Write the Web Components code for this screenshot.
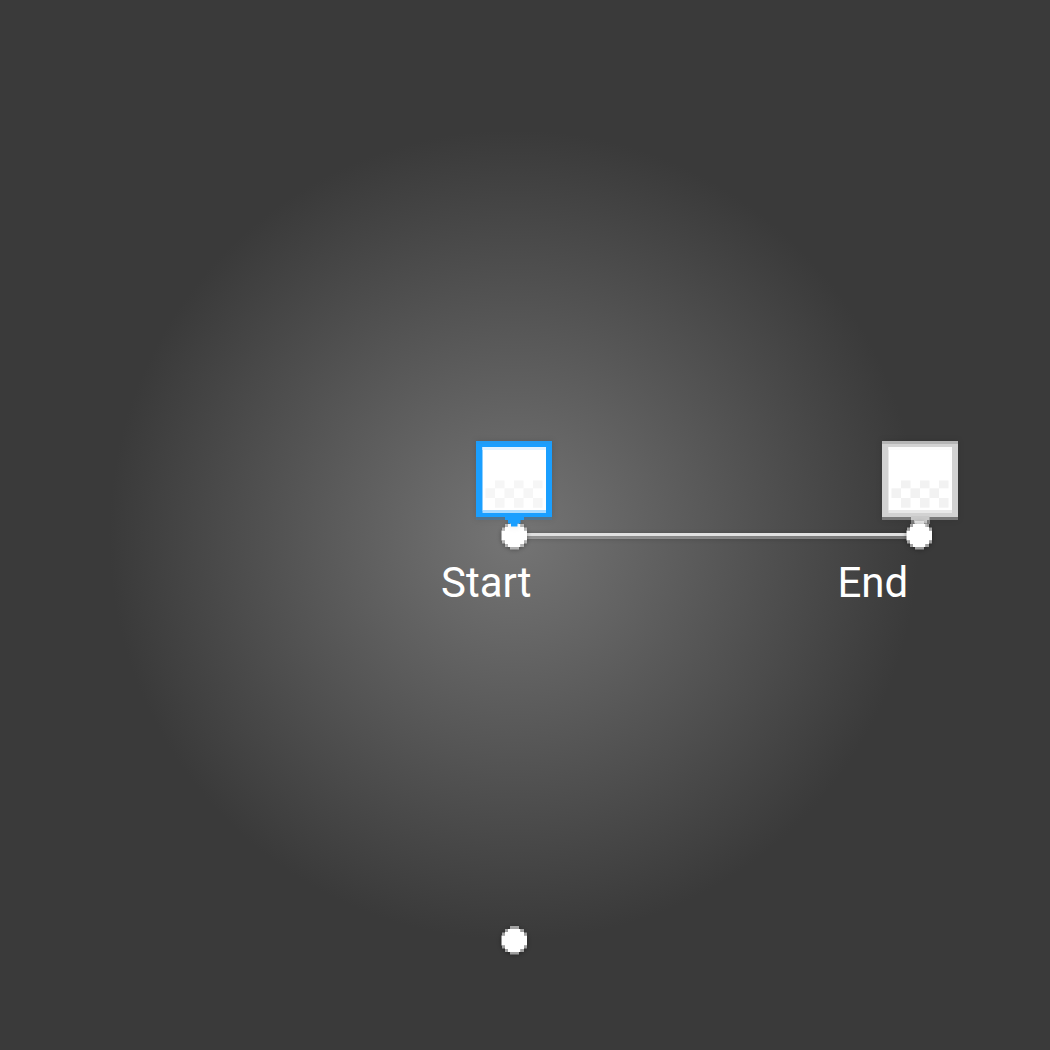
<!DOCTYPE html>
<html lang="en">
<head>
<meta charset="utf-8">
<title>Radial gradient editor</title>
<style>
html, body { margin: 0; width: 1050px; height: 1050px; overflow: hidden; background: #3a3a3a; }
</style>
</head>
<body>
<gradient-canvas>
  <gradient-rail style="left:514px;top:533px;width:405px"></gradient-rail>
  <color-stop style="left:876px;top:435px"></color-stop>
  <drag-handle style="left:498px;top:519px"></drag-handle>
  <drag-handle style="left:903px;top:519px"></drag-handle>
  <drag-handle style="left:498px;top:924px"></drag-handle>
  <color-stop selected style="left:470px;top:435px"></color-stop>
  <stop-label style="left:441px;top:558px">Start</stop-label>
  <stop-label style="left:837.5px;top:558px">End</stop-label>
</gradient-canvas>
<script>
class GradientCanvas extends HTMLElement {
  constructor() {
    super();
    this.attachShadow({ mode: 'open' }).innerHTML = `
      <style>
        :host { display: block; position: relative; width: 1050px; height: 1050px; overflow: hidden;
          background: radial-gradient(circle 405px at 514px 535px, #757575, #3a3a3a) #3a3a3a; }
      </style><slot></slot>`;
  }
}
class GradientRail extends HTMLElement {
  constructor() {
    super();
    this.attachShadow({ mode: 'open' }).innerHTML = `
      <style>
        :host { display: flex; flex-direction: column; position: absolute; filter: drop-shadow(0 1px 2px rgba(0,0,0,.3)); }
        .hi { height: 3px; background: #e0e0e0; }
        .lo { height: 3px; background: rgba(255,255,255,.32); }
      </style><div class="hi"></div><div class="lo"></div>`;
  }
}
class ColorStop extends HTMLElement {
  constructor() { super(); this.attachShadow({ mode: 'open' }); }
  connectedCallback() {
    const on = this.hasAttribute('selected');
    const c = on
      ? { top: '#219cf5', body: '#1a9fff', foot: 'rgba(60,125,175,.5)', upper: '#e3f3ff', lower: '#a9dbff', check: '#f6f6f6', stem: '#1a9fff' }
      : { top: '#b5b5b5', body: '#d2d2d2', foot: 'rgba(160,160,160,.62)', upper: '#fbfbfb', lower: '#e8e8e8', check: '#f2f2f2', stem: '#c9c9c9' };
    // Rows of the transparency checker: [x of the first cell, y, height]
    const rows = [[25, 45.5, 7.8], [15.5, 53.3, 9.7], [25, 63, 9.7]];
    let cells = '';
    for (const [x, y, h] of rows)
      for (let i = 0; i < 3; i++)
        cells += `<rect x="${x + i * 19}" y="${y}" width="9.5" height="${h}"/>`;
    const stem = on
      ? '<path d="M35 81H54v4H50.500v3.500H47.500v3H41v-3H38V85H35z"/>'
      : '<path d="M35 81H53.500v4H51v3.500H48v6H41v-6H38V85H35z"/><path d="M35 85h3v4h-3zM51 85h3v4h-3zM38 88h3v4h-3zM48 88h3v4h-3z" opacity=".5"/>';
    this.shadowRoot.innerHTML = `
      <style>
        :host { display: block; position: absolute; width: 88px; height: 100px; filter: drop-shadow(0 0 3px rgba(0,0,0,.12)); }
        svg { display: block; }
      </style>
      <svg width="88" height="100" viewBox="0 0 88 100">
        <rect x="6" y="82" width="76" height="3" fill="${c.foot}"/>
        <rect x="6" y="6" width="76" height="76" fill="${c.body}"/>
        <rect x="6" y="6" width="76" height="3" fill="${c.top}"/>
        <rect x="12.500" y="12" width="63.500" height="63.500" fill="#fff"/>
        <rect x="12.500" y="12" width="63.500" height="3" fill="${c.upper}"/>
        <rect x="12.500" y="75" width="63.500" height="3" fill="${c.lower}"/>
        <g fill="${c.check}">${cells}</g>
        <g fill="${c.stem}">${stem}</g>
      </svg>`;
  }
}
class DragHandle extends HTMLElement {
  constructor() {
    super();
    this.attachShadow({ mode: 'open' }).innerHTML = `
      <style>
        :host { display: block; position: absolute; width: 33px; height: 33px; filter: drop-shadow(0 1px 2px rgba(0,0,0,.4)); }
        svg { display: block; }
      </style>
      <svg width="33" height="33" viewBox="0 0 33 33" fill="#fff">
        <path d="M10 5H22.500V8H26V11.500H29V21.500H26V25H22.500V28H10V25H7V21.500H3.500V11.500H7V8H10z"/>
        <g opacity=".55">
          <rect x="12" y="2" width="9" height="3"/><rect x="12" y="28" width="9" height="2.500"/>
          <rect x="7" y="5" width="3" height="3"/><rect x="22.500" y="5" width="3.500" height="3"/>
          <rect x="7" y="25" width="3" height="3"/><rect x="22.500" y="25" width="3.500" height="3"/>
          <rect x="4" y="8.500" width="3" height="3"/><rect x="26" y="8.500" width="3" height="3"/>
          <rect x="4" y="21.500" width="3" height="3"/><rect x="26" y="21.500" width="3" height="3"/>
        </g>
      </svg>`;
  }
}
class StopLabel extends HTMLElement {
  constructor() {
    super();
    this.attachShadow({ mode: 'open' }).innerHTML = `
      <style>
        :host { display: block; position: absolute; width: max-content; color: #fff; white-space: nowrap;
          font: 400 42px/50px Roboto, sans-serif; }
      </style><slot></slot>`;
  }
}
customElements.define('gradient-canvas', GradientCanvas);
customElements.define('gradient-rail', GradientRail);
customElements.define('color-stop', ColorStop);
customElements.define('drag-handle', DragHandle);
customElements.define('stop-label', StopLabel);
</script>
</body>
</html>
